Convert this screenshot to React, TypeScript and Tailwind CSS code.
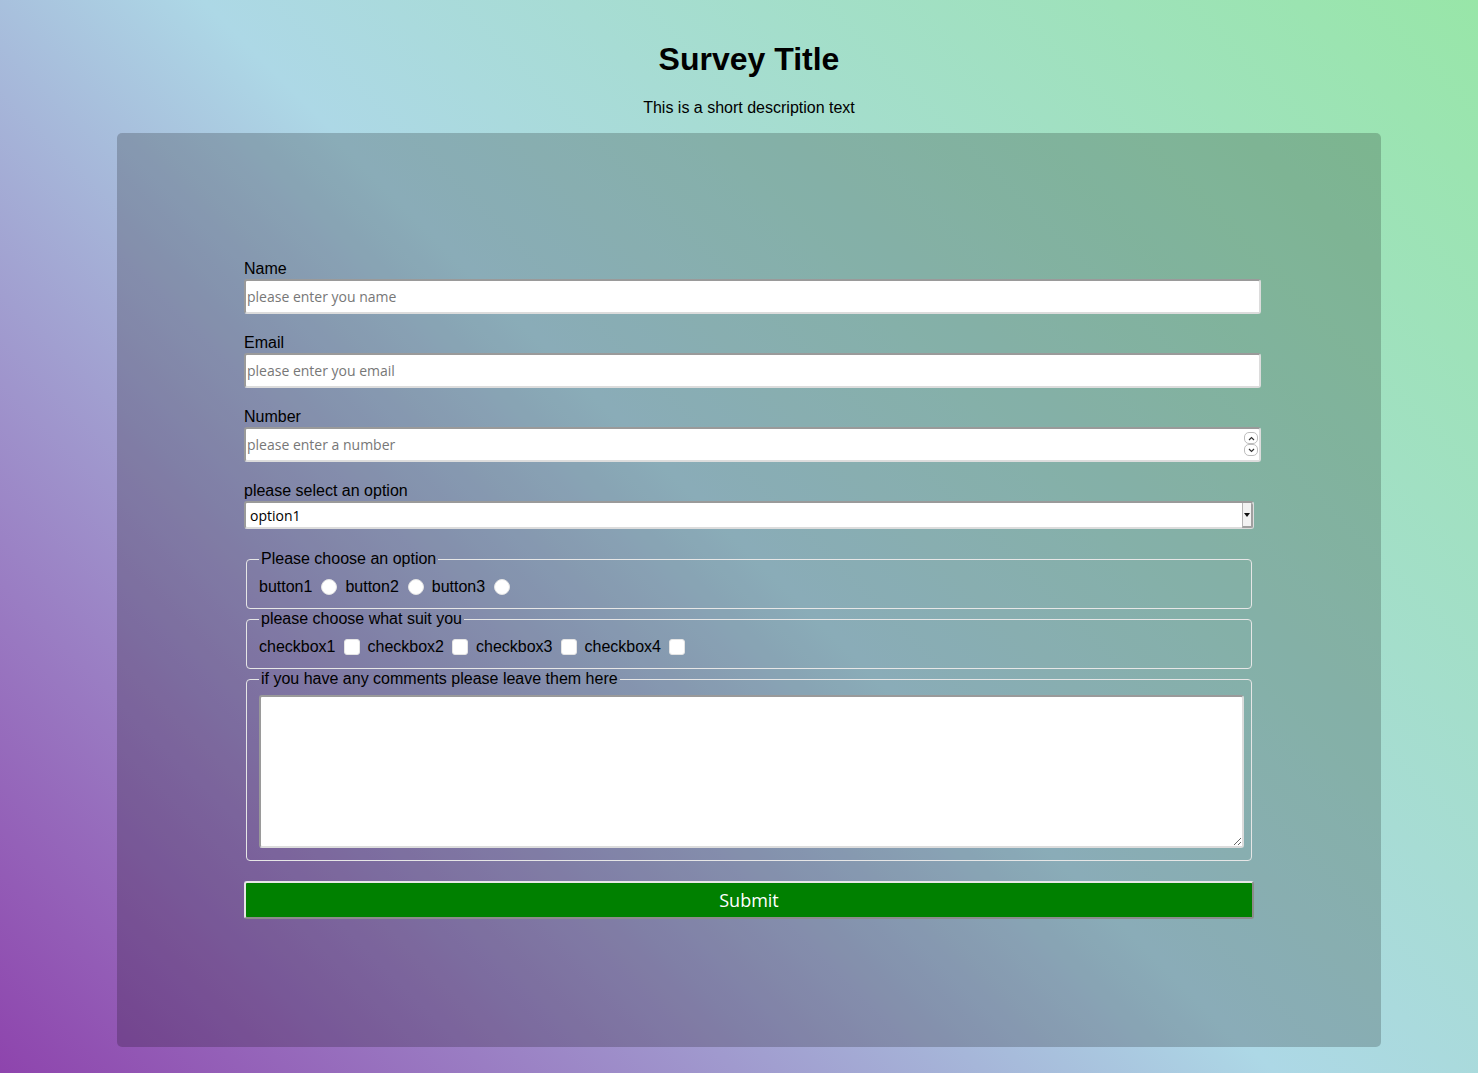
import { useState } from "react"

const inputCls =
  "block w-[1017px] h-[35px] mt-[1px] bg-white rounded-[3px] border-2 border-t-[#9a9a9a] border-l-[#9a9a9a] border-b-[#dcdcdc] border-r-[#dcdcdc] px-px text-[14px] text-black font-['Open_Sans',sans-serif] placeholder:text-[#777] outline-none"

const fieldsetCls =
  "w-[1006px] min-w-0 mx-[2px] border border-[#e6e6e6] rounded-[4px] px-[12px] pt-[7px] pb-[9px]"

function Radio({ name }: { name: string }) {
  return (
    <input
      type="radio"
      name={name}
      className="appearance-none w-4 h-4 rounded-full bg-white border border-[#e4e4e4] ml-[9px] mr-[8px]"
    />
  )
}

function Checkbox() {
  return (
    <input
      type="checkbox"
      className="appearance-none w-4 h-4 rounded-[3px] bg-white border border-[#e4e4e4] mx-[8px]"
    />
  )
}

export default function App() {
  const [option, setOption] = useState("option1")

  return (
    <div className="min-h-screen bg-[linear-gradient(45deg,#8e44ad,#add8e6,#98e6a8)] pt-[41px] pb-[26px] pl-[20px] font-['Liberation_Sans',Arial,sans-serif] text-black">
      <h1 className="text-center text-[32px] leading-[37px] font-bold">Survey Title</h1>
      <p className="text-center text-base leading-[18px] mt-[21px] mb-[16px]">This is a short description text</p>

      <div className="w-[1264px] mx-auto bg-black/20 rounded-[5px] pt-[127px] pb-[128px] px-[127px]">
        <form onSubmit={(e) => e.preventDefault()}>
          <label className="block text-base leading-[18px]">Name</label>
          <input type="text" placeholder="please enter you name" className={inputCls} />

          <label className="block text-base leading-[18px] mt-[20px]">Email</label>
          <input type="email" placeholder="please enter you email" className={inputCls} />

          <label className="block text-base leading-[18px] mt-[20px]">Number</label>
          <div className="relative w-[1017px]">
            <input type="text" inputMode="numeric" placeholder="please enter a number" className={inputCls} />
            <div className="absolute right-[3px] top-[5px] flex flex-col">
              <span className="w-[14px] h-[12px] border border-[#bdbdbd] rounded-[5px] bg-white flex items-center justify-center">
                <svg width="7" height="5" viewBox="0 0 7 5">
                  <path d="M1 4 L3.5 1.5 L6 4" fill="none" stroke="#333" strokeWidth="1.2" />
                </svg>
              </span>
              <span className="w-[14px] h-[12px] border border-[#bdbdbd] rounded-[5px] bg-white flex items-center justify-center">
                <svg width="7" height="5" viewBox="0 0 7 5">
                  <path d="M1 1 L3.5 3.5 L6 1" fill="none" stroke="#333" strokeWidth="1.2" />
                </svg>
              </span>
            </div>
          </div>

          <label className="block text-base leading-[18px] mt-[20px]">please select an option</label>
          <div className="relative w-[1010px] mt-px">
            <select
              value={option}
              onChange={(e) => setOption(e.target.value)}
              className="appearance-none block w-full h-[28px] bg-white rounded-[3px] border-2 border-t-[#9a9a9a] border-l-[#9a9a9a] border-b-[#dcdcdc] border-r-[#dcdcdc] pl-[4px] text-[14px] text-black font-['Open_Sans',sans-serif] outline-none"
            >
              <option>option1</option>
              <option>option2</option>
              <option>option3</option>
            </select>
            <span className="absolute right-[1px] top-[2px] bottom-[1px] w-[11px] bg-[#f2f2f2] border-l border-[#b5b5b5] border-r-2 border-r-[#a0a0a0] border-b-2 border-b-[#a0a0a0] rounded-r-[2px] flex items-center justify-center pointer-events-none">
              <svg width="6" height="4" viewBox="0 0 6 4">
                <path d="M0 0 L6 0 L3 4 Z" fill="#111" />
              </svg>
            </span>
          </div>

          <fieldset className={`${fieldsetCls} mt-[21px]`}>
            <legend className="px-[2px] text-base leading-[18px]">Please choose an option</legend>
            <div className="flex items-center h-[24px] text-base">
              <span>button1</span>
              <Radio name="btn" />
              <span>button2</span>
              <Radio name="btn" />
              <span>button3</span>
              <Radio name="btn" />
            </div>
          </fieldset>

          <fieldset className={`${fieldsetCls} mt-[1px]`}>
            <legend className="px-[2px] text-base leading-[18px]">please choose what suit you</legend>
            <div className="flex items-center h-[24px] text-base">
              <span>checkbox1</span>
              <Checkbox />
              <span>checkbox2</span>
              <Checkbox />
              <span>checkbox3</span>
              <Checkbox />
              <span>checkbox4</span>
              <Checkbox />
            </div>
          </fieldset>

          <fieldset className={`${fieldsetCls} mt-[1px]`}>
            <legend className="px-[2px] text-base leading-[18px]">if you have any comments please leave them here</legend>
            <textarea className="block w-[985px] h-[153px] mb-[3px] bg-white rounded-[3px] border-2 border-t-[#9a9a9a] border-l-[#9a9a9a] border-b-[#dcdcdc] border-r-[#dcdcdc] outline-none" />
          </fieldset>

          <button
            type="submit"
            className="block w-[1010px] h-[38px] mt-[20px] bg-[#008000] rounded-[3px] border-2 border-t-[#e6e6e6] border-l-[#e6e6e6] border-b-[#8c8c8c] border-r-[#8c8c8c] text-white text-[18px] font-['Open_Sans',sans-serif]"
          >
            Submit
          </button>
        </form>
      </div>
    </div>
  )
}
